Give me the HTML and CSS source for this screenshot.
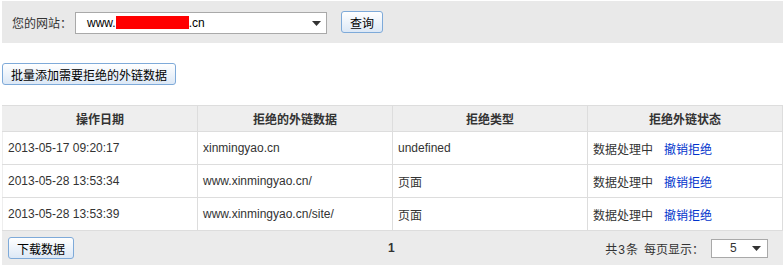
FILE: index.html
```html
<!DOCTYPE html>
<html lang="zh-CN">
<head>
    <meta charset="UTF-8">
    <title>拒绝外链</title>
    <link rel="stylesheet" href="styles.css">
</head>
<body>
    <div class="page">
        <div class="site-bar">
            <span class="site-label">您的网站：</span>
            <div class="combo site-combo">
                <span class="combo-text">www.<span class="redact"></span>.cn</span>
                <svg class="combo-arrow" width="9" height="5" viewBox="0 0 9 5"><path d="M0 0h9L4.5 5z" fill="#333"/></svg>
            </div>
            <button class="btn">查询</button>
        </div>

        <div class="actions">
            <button class="btn">批量添加需要拒绝的外链数据</button>
        </div>

        <table class="grid">
            <thead>
                <tr>
                    <th>操作日期</th>
                    <th>拒绝的外链数据</th>
                    <th>拒绝类型</th>
                    <th>拒绝外链状态</th>
                </tr>
            </thead>
            <tbody>
                <tr>
                    <td>2013-05-17 09:20:17</td>
                    <td>xinmingyao.cn</td>
                    <td>undefined</td>
                    <td>数据处理中<a href="#" class="undo">撤销拒绝</a></td>
                </tr>
                <tr>
                    <td>2013-05-28 13:53:34</td>
                    <td>www.xinmingyao.cn/</td>
                    <td>页面</td>
                    <td>数据处理中<a href="#" class="undo">撤销拒绝</a></td>
                </tr>
                <tr>
                    <td>2013-05-28 13:53:39</td>
                    <td>www.xinmingyao.cn/site/</td>
                    <td>页面</td>
                    <td>数据处理中<a href="#" class="undo">撤销拒绝</a></td>
                </tr>
            </tbody>
        </table>

        <div class="pager">
            <button class="btn">下载数据</button>
            <span class="page-num">1</span>
            <div class="page-info">
                <span class="total">共3条</span>
                <span class="per-page">每页显示：</span>
                <div class="combo size-combo">
                    <span class="combo-text">5</span>
                    <svg class="combo-arrow" width="9" height="5" viewBox="0 0 9 5"><path d="M0 0h9L4.5 5z" fill="#333"/></svg>
                </div>
            </div>
        </div>
    </div>
</body>
</html>
```

FILE: styles.css
```css
body {
    margin: 0;
    font-family: "Liberation Sans", Arial, "Noto Sans CJK SC", sans-serif;
    font-size: 12px;
    color: #333;
    background-color: #fff;
}
.page {
    padding: 1px 0 0 2px;
}
.site-bar {
    display: flex;
    align-items: center;
    height: 42px;
    background-color: #e9e9e9;
}
.site-label {
    margin-left: 10px;
    width: 63px;
}
.combo {
    display: flex;
    align-items: center;
    justify-content: space-between;
    box-sizing: border-box;
    background-color: #fff;
    border: 1px solid #a9a9a9;
}
.site-combo {
    width: 252px;
    height: 22px;
    padding: 0 5px 0 11px;
    margin-top: 2px;
    color: #000;
}
.redact {
    display: inline-block;
    width: 73px;
    height: 13px;
    background-color: #ff0000;
    vertical-align: -2px;
}
.combo-arrow {
    display: block;
}
.btn {
    box-sizing: border-box;
    height: 22px;
    padding: 0 6px;
    font-family: inherit;
    font-size: 12px;
    color: #000;
    border: 1px solid #7eaad9;
    border-radius: 3px;
    background: linear-gradient(#ffffff, #dce8f6);
    cursor: pointer;
}
.site-bar .btn {
    width: 42px;
    margin-left: 14px;
}
.actions {
    padding: 20px 0 20px 0;
}
.actions .btn {
    width: 174px;
}
.grid {
    width: 781px;
    border-collapse: collapse;
    table-layout: fixed;
}
.grid th,
.grid td {
    border: 1px solid #dddddd;
    height: 32px;
    padding: 0 0 0 5px;
    text-align: left;
}
.grid th {
    height: 25px;
    background-color: #eeeeee;
    text-align: center;
    font-weight: bold;
    padding: 0;
}
.grid tr > :first-child {
    border-left-color: #eeeeee;
}
.undo {
    margin-left: 11px;
    color: #0033cc;
    text-decoration: none;
}
.pager {
    display: flex;
    align-items: center;
    height: 34px;
    padding: 0 15px 0 6px;
    background-color: #ebebeb;
}
.pager .btn {
    width: 66px;
}
.page-num {
    margin-left: 314px;
    font-weight: bold;
}
.page-info {
    display: flex;
    align-items: center;
    margin-left: auto;
}
.total {
    letter-spacing: 1px;
}
.per-page {
    margin: 0 7px 0 5px;
}
.size-combo {
    width: 57px;
    height: 19px;
    padding: 0 6px 0 18px;
}
```
